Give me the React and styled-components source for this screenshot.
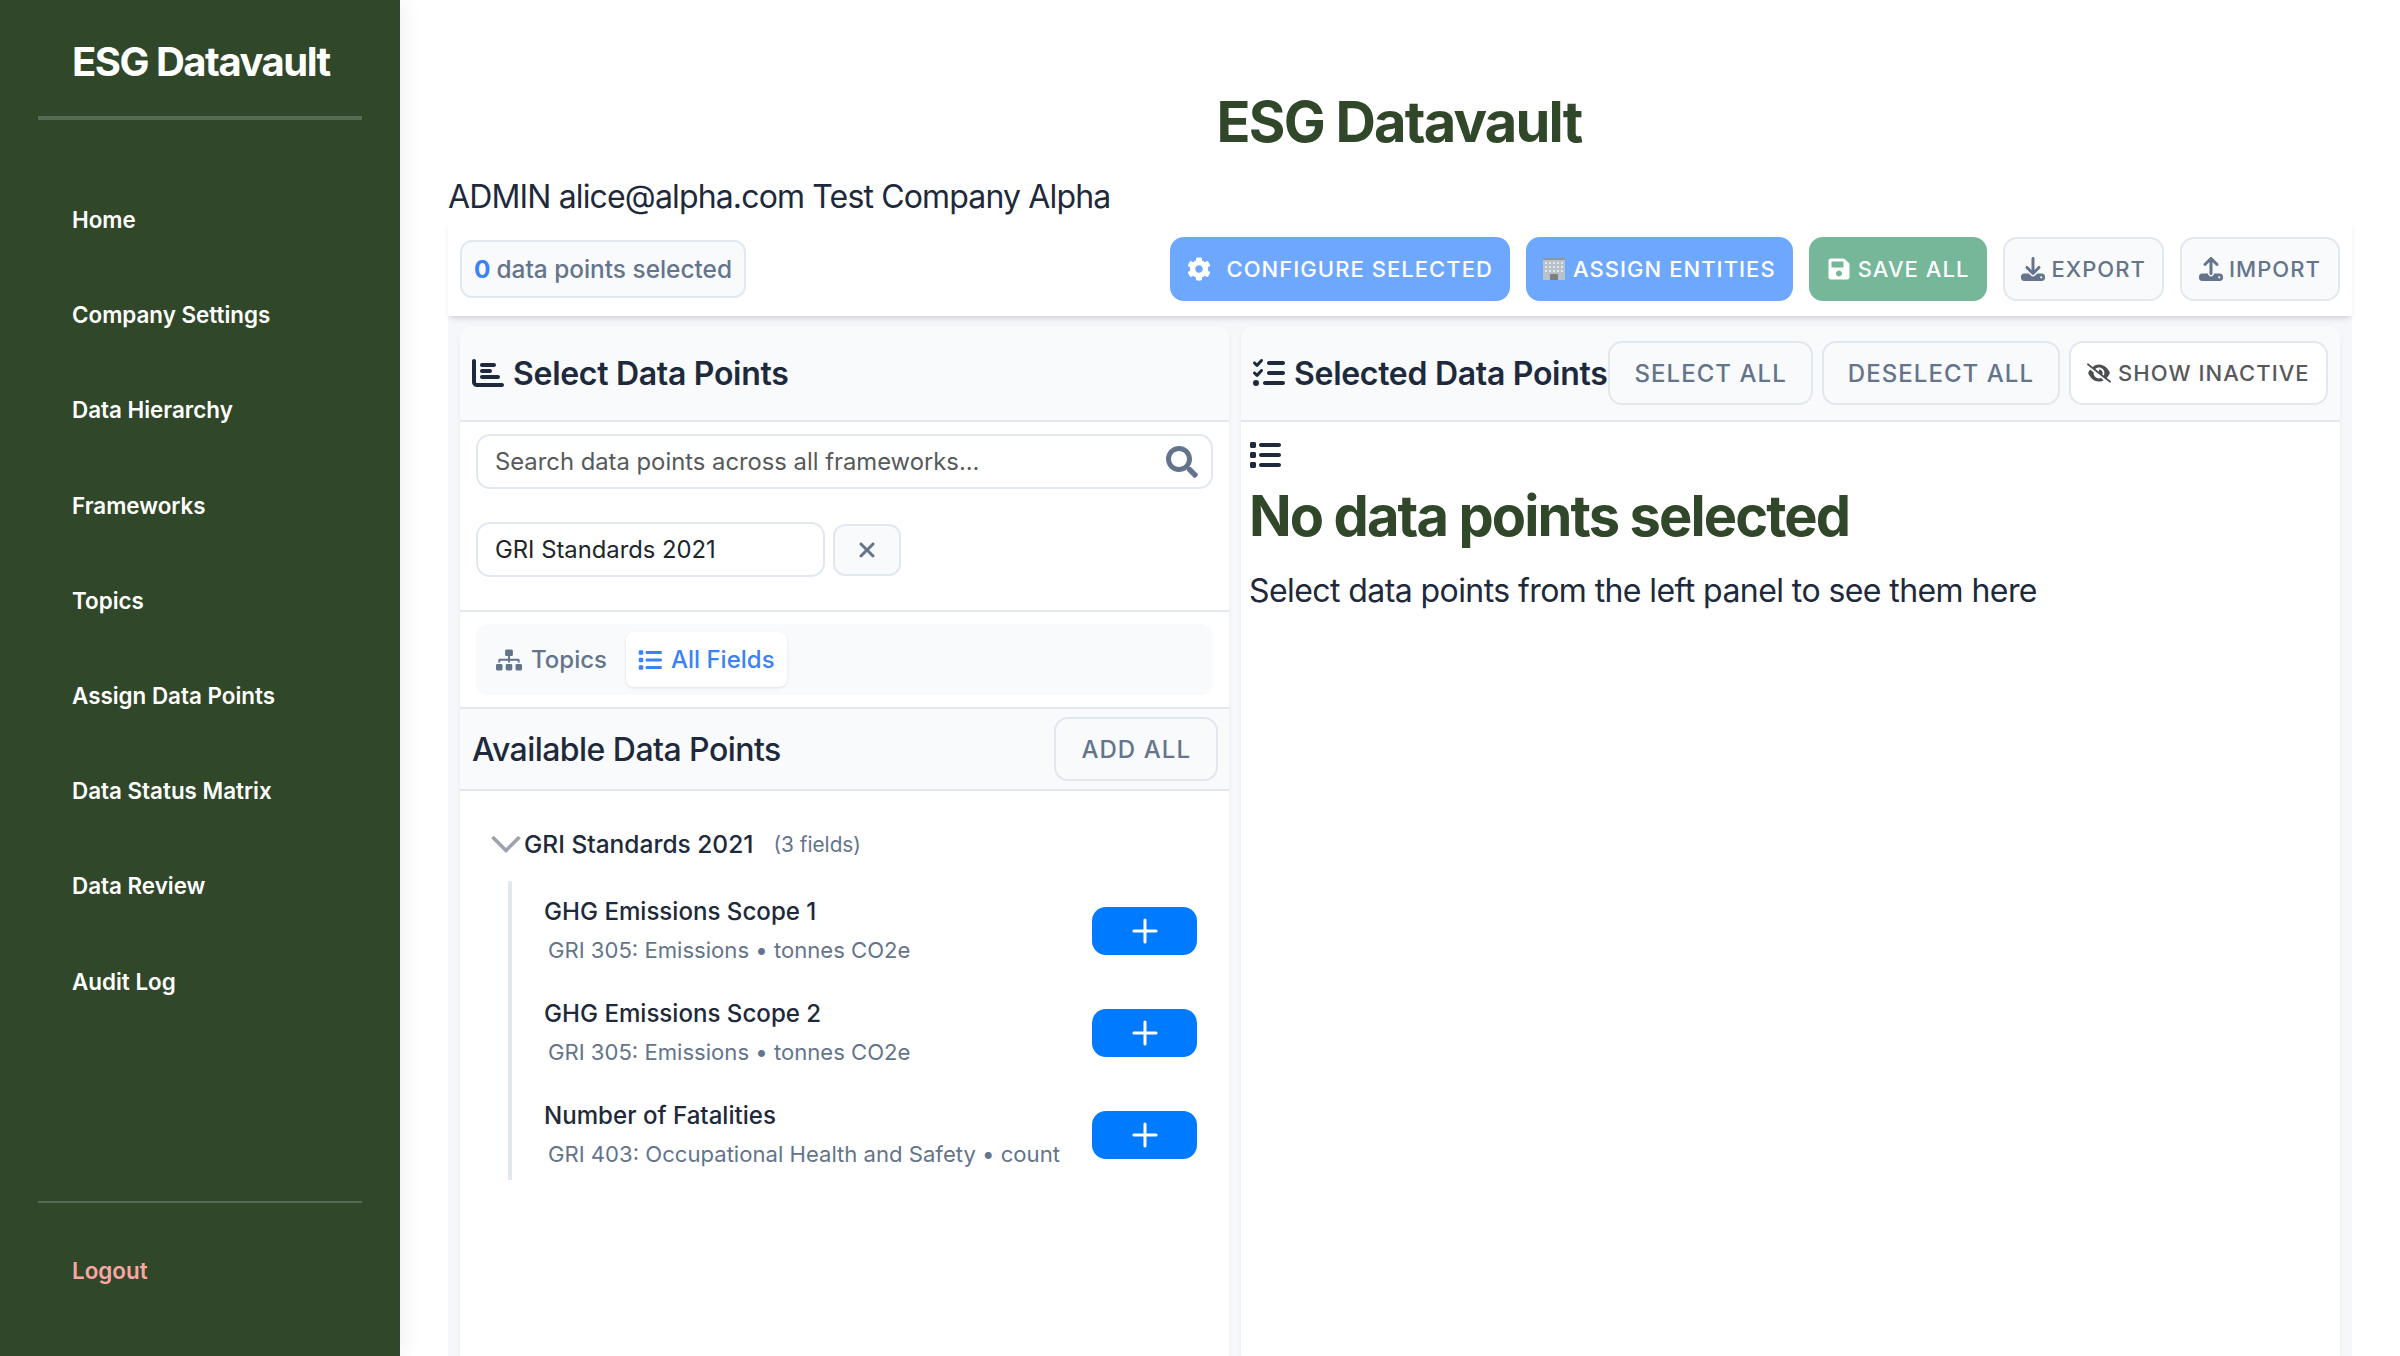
import React from "react";
import styled, { createGlobalStyle } from "styled-components";
import { FaCog, FaSave, FaSearch, FaSitemap } from "react-icons/fa";
import {
  FaChartBar,
  FaDownload,
  FaEyeSlash,
  FaList,
  FaListCheck,
  FaUpload,
  FaXmark,
} from "react-icons/fa6";
import { Plus } from "lucide-react";

const GlobalStyle = createGlobalStyle`
  html, body {
    margin: 0;
    padding: 0;
    background: #fff;
  }
  body {
    font-family: Inter, "Liberation Sans", sans-serif;
    color: #1e293b;
  }
  * { box-sizing: border-box; }
`;

const Page = styled.div`
  display: flex;
  width: 2400px;
  height: 1356px;
  overflow: hidden;
`;

const Sidebar = styled.aside`
  flex: 0 0 400px;
  display: flex;
  flex-direction: column;
  background: #30472a;
  padding: 0 38px;
  box-shadow: 4px 0 20px rgba(0, 0, 0, 0.06);
  z-index: 2;
`;

const Brand = styled.div`
  padding: 38px 0 36px 34px;
  height: 120px;
  font-size: 40px;
  line-height: 48px;
  font-weight: 700;
  letter-spacing: -1.5px;
  color: #fff;
  white-space: nowrap;
  border-bottom: 4px solid rgba(255, 255, 255, 0.2);
`;

const Nav = styled.nav`
  display: flex;
  flex-direction: column;
  padding-top: 52px;
`;

const NavItem = styled.a`
  display: flex;
  align-items: center;
  height: 95.2px;
  padding-left: 34px;
  font-size: 22.4px;
  font-weight: 600;
  color: ${(props) => (props.$danger ? "#fca5a5" : "#fff")};
`;

const SidebarFooter = styled.div`
  margin-top: auto;
  height: 155px;
  padding-top: 20px;
  border-top: 2px solid rgba(255, 255, 255, 0.2);
`;

const Main = styled.main`
  flex: 1;
  min-width: 0;
  display: flex;
  flex-direction: column;
  padding: 88px 48px 0;
`;

const PageTitle = styled.h1`
  margin: 0;
  height: 68px;
  padding-right: 2px;
  font-size: 56px;
  line-height: 68px;
  font-weight: 700;
  letter-spacing: -1.8px;
  text-align: center;
  color: #30472a;
`;

const UserLine = styled.div`
  margin-top: 17px;
  height: 48px;
  font-size: 32px;
  line-height: 48px;
  letter-spacing: -0.85px;
  color: #1e293b;
`;

const Toolbar = styled.div`
  display: flex;
  align-items: center;
  height: 95px;
  padding: 0 12px;
  background: #fff;
  box-shadow: 0 4px 6px -2px rgba(0, 0, 0, 0.16);
  position: relative;
  z-index: 1;
`;

const CountBadge = styled.div`
  height: 58px;
  display: flex;
  align-items: center;
  padding: 0 12px;
  border: 2px solid #e2e8f0;
  border-radius: 12px;
  background: #f8fafc;
  font-size: 24.4px;
  font-weight: 500;
  color: #64748b;
  white-space: nowrap;
  b {
    font-weight: 700;
    color: #3b82f6;
    margin-right: 6px;
  }
`;

const ToolbarActions = styled.div`
  margin-left: auto;
  display: flex;
  gap: 16px;
`;

const ActionButton = styled.button`
  height: 64px;
  display: inline-flex;
  align-items: center;
  justify-content: center;
  gap: ${(props) => props.$gap || 7}px;
  padding: 0 ${(props) => props.$pad || 16}px;
  border: 2px solid ${(props) => props.$bg || "#e2e8f0"};
  border-radius: 14px;
  background: ${(props) => props.$bg || "#f8fafc"};
  color: ${(props) => (props.$bg ? "#fff" : "#64748b")};
  font-family: inherit;
  font-size: ${(props) => props.$size || 22}px;
  font-weight: 500;
  letter-spacing: 1.05px;
  text-transform: uppercase;
  white-space: nowrap;
  svg {
    flex: none;
    font-size: 24px;
  }
`;

const InactiveButton = styled(ActionButton)`
  background: #fff;
  color: #57595c;
  svg {
    color: #4b4f52;
    font-size: 24px;
  }
`;

const Workspace = styled.div`
  flex: 1;
  min-height: 0;
  display: flex;
  gap: 12px;
  padding: 10px 12px 0;
  background: #f5f7fa;
`;

const Panel = styled.section`
  display: flex;
  flex-direction: column;
  flex: ${(props) => (props.$left ? "0 0 769px" : "1")};
  min-width: 0;
  background: #fff;
  border-radius: 12px 12px 0 0;
  box-shadow: 0 1px 4px rgba(0, 0, 0, 0.05);
`;

const PanelHeader = styled.header`
  flex: none;
  height: 96px;
  display: flex;
  align-items: center;
  padding: 0 12px;
  background: #f8fafc;
  border-radius: 12px 12px 0 0;
  border-bottom: 2px solid #e2e8f0;
`;

const PanelTitle = styled.h2`
  margin: 0;
  display: flex;
  align-items: center;
  gap: 9px;
  font-size: 32px;
  font-weight: 600;
  letter-spacing: -0.3px;
  color: #1e293b;
  white-space: nowrap;
  svg {
    font-size: 32px;
  }
`;

const HeaderActions = styled.div`
  margin-left: 1px;
  display: flex;
  gap: 9px;
`;

const FilterSection = styled.div`
  flex: none;
  height: 190px;
  padding: 12px 16px 0;
  border-bottom: 2px solid #e2e8f0;
`;

const SearchBox = styled.div`
  height: 55px;
  display: flex;
  align-items: center;
  justify-content: space-between;
  padding: 0 13px 0 17px;
  border: 2px solid #e2e8f0;
  border-radius: 14px;
  font-size: 23.8px;
  color: #57595c;
  svg {
    font-size: 32px;
    color: #64748b;
  }
`;

const FrameworkRow = styled.div`
  margin-top: 33px;
  display: flex;
  align-items: center;
  gap: 8px;
`;

const FrameworkSelect = styled.div`
  width: 349px;
  height: 55px;
  display: flex;
  align-items: center;
  padding: 0 17px;
  border: 2px solid #e2e8f0;
  border-radius: 14px;
  font-size: 23.8px;
  color: #212529;
`;

const ClearButton = styled.button`
  width: 68px;
  height: 52px;
  display: flex;
  align-items: center;
  justify-content: center;
  border: 2px solid #e2e8f0;
  border-radius: 12px;
  background: #f8fafc;
  color: #64748b;
  font-size: 24px;
`;

const TabsSection = styled.div`
  flex: none;
  height: 97px;
  padding: 12px 16px 0;
  border-bottom: 2px solid #e2e8f0;
`;

const Tabs = styled.div`
  height: 71px;
  display: flex;
  align-items: center;
  gap: 7px;
  padding: 0 8px;
  background: #f8fafc;
  border-radius: 12px;
`;

const Tab = styled.div`
  height: 55px;
  display: flex;
  align-items: center;
  gap: 9px;
  padding: 0 12px;
  border-radius: 8px;
  font-size: 24px;
  font-weight: 500;
  color: ${(props) => (props.$active ? "#3b82f6" : "#64748b")};
  background: ${(props) => (props.$active ? "#fff" : "transparent")};
  box-shadow: ${(props) => (props.$active ? "0 1px 3px rgba(0,0,0,0.1)" : "none")};
  svg {
    font-size: ${(props) => (props.$active ? 24 : 26)}px;
  }
`;

const AvailableHeader = styled.div`
  flex: none;
  height: 82px;
  display: flex;
  align-items: center;
  justify-content: space-between;
  padding: 0 12px;
  background: #f8fafc;
  border-bottom: 2px solid #e2e8f0;
`;

const SubTitle = styled.h3`
  margin: 0;
  font-size: 32px;
  font-weight: 500;
  letter-spacing: -0.55px;
  color: #1e293b;
`;

const AddAllButton = styled(ActionButton)`
  margin-right: -1px;
`;

const GroupList = styled.div`
  padding: 33px 32px 0 31px;
`;

const GroupHeader = styled.div`
  height: 40px;
  display: flex;
  align-items: center;
  font-size: 24.5px;
  font-weight: 500;
  color: #1e293b;
  svg {
    flex: none;
    margin-right: 3px;
  }
`;

const GroupCount = styled.span`
  margin-left: 20px;
  font-size: 20.8px;
  font-weight: 400;
  color: #64748b;
`;

const FieldList = styled.div`
  margin: 17px 0 0 17px;
  border-left: 4px solid #e2e8f0;
  padding: 0 0 0 32px;
  height: 299px;
  display: flex;
  flex-direction: column;
  & > :first-child {
    margin-top: -1px;
  }
`;

const FieldRow = styled.div`
  flex: none;
  height: 102px;
  display: flex;
  align-items: center;
  justify-content: space-between;
`;

const FieldName = styled.div`
  font-size: 24.1px;
  line-height: 30px;
  font-weight: 500;
  color: #1e293b;
`;

const FieldMeta = styled.div`
  margin: 8px 0 0 4px;
  font-size: 22.1px;
  line-height: 30px;
  color: #64748b;
  white-space: nowrap;
`;

const AddButton = styled.button`
  flex: none;
  width: 105px;
  height: 48px;
  display: flex;
  align-items: center;
  justify-content: center;
  border: none;
  border-radius: 14px;
  background: #007bff;
  color: #fff;
`;

const EmptyState = styled.div`
  padding: 17px 8px;
  svg {
    display: block;
    font-size: 32px;
    color: #1e293b;
  }
`;

const EmptyTitle = styled.h3`
  margin: 11px 0 0;
  font-size: 56px;
  line-height: 68px;
  font-weight: 700;
  letter-spacing: -1.9px;
  color: #30472a;
`;

const EmptyText = styled.p`
  margin: 17px 0 0;
  font-size: 32px;
  line-height: 48px;
  letter-spacing: -0.58px;
  color: #1e293b;
`;

// the emoji on the assign button, drawn because no emoji font is available
const BuildingIcon = () => (
  <svg width="22" height="22" viewBox="0 0 22 22">
    <rect x="0" y="0" width="22" height="22" fill="#b9c2c8" />
    <rect x="0" y="0" width="22" height="2" fill="#8d979e" />
    {[4, 8, 12].map((y) =>
      [2, 6, 10, 14, 18].map((x) => (
        <rect key={`${x}-${y}`} x={x} y={y} width="2" height="2" fill="#dfe5e8" />
      ))
    )}
    <rect x="7" y="16" width="8" height="6" fill="#7d7f80" />
  </svg>
);

const navItems = [
  "Home",
  "Company Settings",
  "Data Hierarchy",
  "Frameworks",
  "Topics",
  "Assign Data Points",
  "Data Status Matrix",
  "Data Review",
  "Audit Log",
];

const fields = [
  { name: "GHG Emissions Scope 1", meta: "GRI 305: Emissions • tonnes CO2e" },
  { name: "GHG Emissions Scope 2", meta: "GRI 305: Emissions • tonnes CO2e" },
  { name: "Number of Fatalities", meta: "GRI 403: Occupational Health and Safety • count" },
];

export default function App() {
  return (
    <Page>
      <GlobalStyle />
      <Sidebar>
        <Brand>ESG Datavault</Brand>
        <Nav>
          {navItems.map((item) => (
            <NavItem key={item}>{item}</NavItem>
          ))}
        </Nav>
        <SidebarFooter>
          <NavItem $danger>Logout</NavItem>
        </SidebarFooter>
      </Sidebar>
      <Main>
        <PageTitle>ESG Datavault</PageTitle>
        <UserLine>ADMIN alice@alpha.com Test Company Alpha</UserLine>
        <Toolbar>
          <CountBadge>
            <b>0</b> data points selected
          </CountBadge>
          <ToolbarActions>
            <ActionButton $bg="#6ea8fe" $pad={15} $gap={16}>
              <FaCog />
              Configure Selected
            </ActionButton>
            <ActionButton $bg="#6ea8fe" $pad={15} $gap={8}>
              <BuildingIcon />
              Assign Entities
            </ActionButton>
            <ActionButton $bg="#75b798" $pad={16} $gap={7}>
              <FaSave />
              Save All
            </ActionButton>
            <ActionButton $gap={6}>
              <FaDownload />
              Export
            </ActionButton>
            <ActionButton $pad={17} $gap={6}>
              <FaUpload />
              Import
            </ActionButton>
          </ToolbarActions>
        </Toolbar>
        <Workspace>
          <Panel $left>
            <PanelHeader>
              <PanelTitle>
                <FaChartBar />
                Select Data Points
              </PanelTitle>
            </PanelHeader>
            <FilterSection>
              <SearchBox>
                Search data points across all frameworks...
                <FaSearch />
              </SearchBox>
              <FrameworkRow>
                <FrameworkSelect>GRI Standards 2021</FrameworkSelect>
                <ClearButton>
                  <FaXmark />
                </ClearButton>
              </FrameworkRow>
            </FilterSection>
            <TabsSection>
              <Tabs>
                <Tab>
                  <FaSitemap />
                  Topics
                </Tab>
                <Tab $active>
                  <FaList />
                  All Fields
                </Tab>
              </Tabs>
            </TabsSection>
            <AvailableHeader>
              <SubTitle>Available Data Points</SubTitle>
              <AddAllButton $pad={25} $size={24}>Add All</AddAllButton>
            </AvailableHeader>
            <GroupList>
              <GroupHeader>
                <svg width="30" height="18" viewBox="0 0 30 18" fill="none">
                  <path d="M1.5 2 L15 15.5 L28.5 2" stroke="#9ca3af" strokeWidth="3.6" />
                </svg>
                GRI Standards 2021
                <GroupCount>(3 fields)</GroupCount>
              </GroupHeader>
              <FieldList>
                {fields.map((field) => (
                  <FieldRow key={field.name}>
                    <div>
                      <FieldName>{field.name}</FieldName>
                      <FieldMeta>{field.meta}</FieldMeta>
                    </div>
                    <AddButton>
                      <Plus size={38} strokeWidth={1.9} />
                    </AddButton>
                  </FieldRow>
                ))}
              </FieldList>
            </GroupList>
          </Panel>
          <Panel>
            <PanelHeader>
              <PanelTitle>
                <FaListCheck />
                Selected Data Points
              </PanelTitle>
              <HeaderActions>
                <ActionButton $pad={24} $size={24}>Select All</ActionButton>
                <ActionButton $pad={24} $size={24}>Deselect All</ActionButton>
                <InactiveButton>
                  <FaEyeSlash />
                  Show Inactive
                </InactiveButton>
              </HeaderActions>
            </PanelHeader>
            <EmptyState>
              <FaList />
              <EmptyTitle>No data points selected</EmptyTitle>
              <EmptyText>Select data points from the left panel to see them here</EmptyText>
            </EmptyState>
          </Panel>
        </Workspace>
      </Main>
    </Page>
  );
}
